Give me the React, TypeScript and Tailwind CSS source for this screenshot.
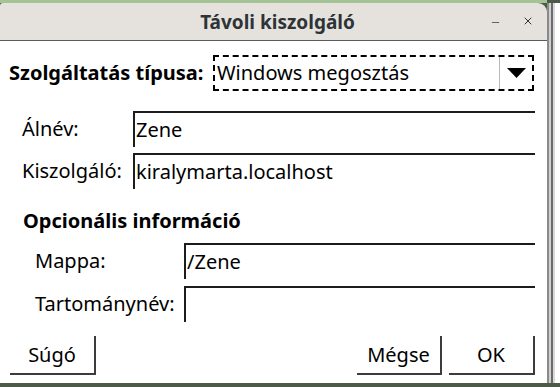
import { X, Minus } from 'lucide-react';

const font = { fontFamily: '"Noto Sans", "Open Sans", sans-serif' };

function Field({ label, value, labelW, indent }: { label: string; value: string; labelW: string; indent: string }) {
  return (
    <div className={`flex items-center ${indent}`}>
      <span className={`${labelW} shrink-0 text-[20px] leading-[24px] text-black`}>{label}</span>
      <div className="flex-1 h-[36px] border-t-2 border-l-2 border-[#1c1c1c] flex items-center pl-[1px] text-[20px] leading-[24px] text-black">
        {value}
      </div>
    </div>
  );
}

export default function App() {
  return (
    <div className="w-[560px] h-[387px] bg-[#4e5a48] flex flex-col overflow-hidden" style={font}>
      <div className="h-[3px] bg-[#a5c496] w-[547px]" />
      <div className="flex flex-1 min-h-0">
        <div className="w-[547px] flex flex-col">
          <div className="h-[38px] bg-[#e5e2de] rounded-tr-[9px] rounded-tl-[3px] border-b border-[#5b5b5b] flex items-center relative">
            <span className="w-full text-center text-[19px] leading-[24px] font-bold text-[#2e3436] pl-[8px]">Távoli kiszolgáló</span>
            <Minus className="absolute left-[490px] top-[14px] text-[#2e3436]" size={11} strokeWidth={1.6} />
            <X className="absolute left-[522px] top-[12px] text-[#2e3436]" size={12} strokeWidth={2} />
          </div>
          <div className="flex-1 bg-white flex flex-col">
            <div className="flex items-center mt-[14px] pl-[9px]">
              <span className="w-[204px] text-[20px] leading-[24px] font-bold text-black">Szolgáltatás típusa:</span>
              <div className="w-[321px] h-[36px] border-2 border-dashed border-black flex items-center">
                <span className="flex-1 pl-[2px] text-[20px] leading-[24px] text-black">Windows megosztás</span>
                <div className="w-[33px] h-full border-l border-[#b8b8b8] flex items-center justify-center">
                  <svg width="19" height="10" viewBox="0 0 19 10">
                    <polygon points="0,0 19,0 9.5,10" fill="#000" />
                  </svg>
                </div>
              </div>
            </div>
            <div className="flex flex-col gap-[6px] mt-[20px] pr-[12px]">
              <Field label="Álnév:" value="Zene" labelW="w-[111px]" indent="pl-[22px]" />
              <Field label="Kiszolgáló:" value="kiralymarta.localhost" labelW="w-[111px]" indent="pl-[22px]" />
            </div>
            <div className="mt-[20px] pl-[23px] text-[20px] leading-[24px] font-bold text-black">Opcionális információ</div>
            <div className="flex flex-col gap-[7px] mt-[10px] pr-[12px]">
              <Field label="Mappa:" value="/Zene" labelW="w-[149px]" indent="pl-[35px]" />
              <Field label="Tartománynév:" value="" labelW="w-[149px]" indent="pl-[35px]" />
            </div>
            <div className="flex items-center mt-[14px] pl-[10px] pr-[12px] gap-[7px]">
              <button className="w-[86px] h-[39px] bg-white border-r-2 border-b-2 border-[#3c3c3c] text-[20px] leading-[24px] text-black">Súgó</button>
              <div className="flex-1" />
              <button className="w-[85px] h-[39px] bg-white border-r-2 border-b-2 border-[#3c3c3c] text-[20px] leading-[24px] text-black">Mégse</button>
              <button className="w-[86px] h-[39px] bg-white border-r-2 border-b-2 border-[#3c3c3c] text-[20px] leading-[24px] text-black">OK</button>
            </div>
          </div>
        </div>
        <div className="flex-1 flex bg-white">
          <div className="w-[2px] bg-[#8a8a8a]" />
          <div className="w-[2px] bg-[#cfcfcf]" />
          <div className="w-[2px] bg-[#6b6b6b]" />
          <div className="w-[2px] bg-[#d8d8d8]" />
          <div className="flex-1 bg-white" />
        </div>
      </div>
      <div className="h-[4px] bg-[#4e5a48]" />
    </div>
  );
}
